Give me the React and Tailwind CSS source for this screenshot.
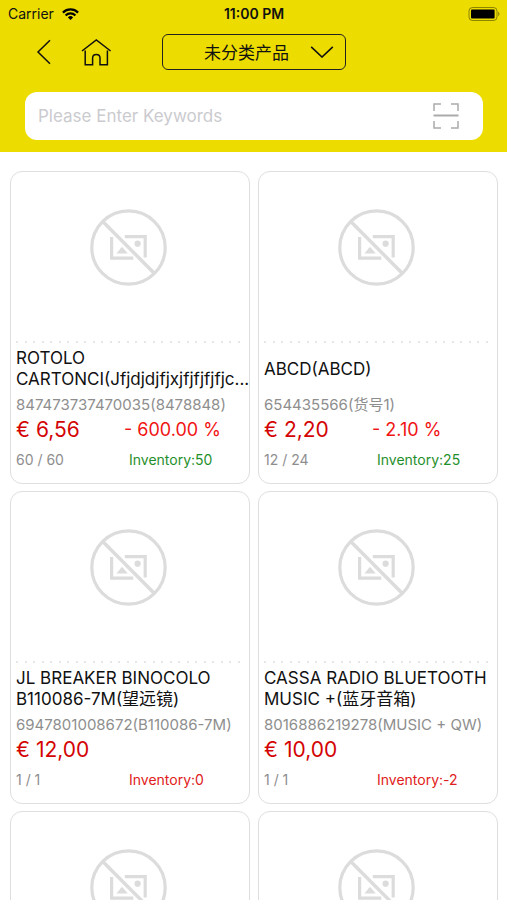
import React, { useState } from 'react';

const products = [
  {
    id: 1,
    name: 'ROTOLO CARTONCI(Jfjdjdjfjxjfjfjfjfjc...',
    code: '847473737470035(8478848)',
    price: '€ 6,56',
    discount: '- 600.00 %',
    pack: '60 / 60',
    inventory: 50
  },
  {
    id: 2,
    name: 'ABCD(ABCD)',
    code: '654435566(货号1)',
    price: '€ 2,20',
    discount: '- 2.10 %',
    pack: '12 / 24',
    inventory: 25
  },
  {
    id: 3,
    name: 'JL BREAKER BINOCOLO B110086-7M(望远镜)',
    code: '6947801008672(B110086-7M)',
    price: '€ 12,00',
    pack: '1 / 1',
    inventory: 0
  },
  {
    id: 4,
    name: 'CASSA RADIO BLUETOOTH MUSIC +(蓝牙音箱)',
    code: '8016886219278(MUSIC + QW)',
    price: '€ 10,00',
    pack: '1 / 1',
    inventory: -2
  },
  { id: 5 },
  { id: 6 }
];

const WifiIcon = () => (
  <svg className="h-3 w-[17px]" viewBox="0 0 17 12" fill="none" stroke="#000" strokeWidth="2.2">
    <path d="M0.9 4.6a10.8 10.8 0 0 1 15.2 0" />
    <path d="M3.6 7.4a6.9 6.9 0 0 1 9.8 0" />
    <path d="M8.5 12L5.9 9.4a3.7 3.7 0 0 1 5.2 0z" fill="#000" stroke="none" />
  </svg>
);

const BatteryIcon = () => (
  <svg className="h-[14px] w-8" viewBox="0 0 32 14" fill="none">
    <rect x="1" y="0.5" width="28" height="13" rx="3.5" stroke="#000" strokeOpacity="0.4" />
    <rect x="3" y="2.4" width="23.6" height="9.2" rx="1" fill="#000" />
    <path d="M30.2 4.8c1.6 0.6 1.6 3.8 0 4.4z" fill="#000" fillOpacity="0.4" />
  </svg>
);

const NoImageIcon = () => (
  <svg className="h-[77px] w-[77px]" viewBox="0 0 77 77" fill="none" stroke="#dcdcdc">
    <circle cx="38.5" cy="38.5" r="36.7" strokeWidth="3.2" />
    <path d="M12.5 12.2L64.2 64.2" strokeWidth="3.4" />
    <path d="M21.6 28v21.2h21.6M34.8 27.6h20.4v21" strokeWidth="3.2" />
    <path d="M26.4 44.6l5.6-6.8 5.8 6.8z" fill="#dcdcdc" stroke="none" />
    <circle cx="47.6" cy="34.7" r="3.1" fill="#dcdcdc" stroke="none" />
  </svg>
);

const DottedLine = () => (
  <div className="flex justify-between pr-px">
    {Array.from({ length: 27 }, (_, i) => (
      <span key={i} className="h-[2px] w-[2px] rounded-full bg-[#dedede]" />
    ))}
  </div>
);

const ProductCard = ({ product }) => (
  <article className="h-[313px] rounded-xl border border-[#dedede] bg-white pl-[5px]">
    <div className="pr-2">
      <div className="flex h-[169px] items-center justify-center pb-[18px]">
        <NoImageIcon />
      </div>
      <DottedLine />
    </div>
    {product.name && (
      <>
        <div className="mt-[5px] flex h-[42px] items-center">
          <h2 className="text-[17px] leading-[21px] text-[#111]">{product.name}</h2>
        </div>
        <p className="mt-[5px] text-[15px] leading-5 whitespace-nowrap text-[#8e8e8e]">{product.code}</p>
        <div className="mt-px flex h-7 items-center whitespace-nowrap">
          <span className="w-[108px] text-[21px] text-[#d40404]">{product.price}</span>
          {product.discount && <span className="text-lg text-[#f01414]">{product.discount}</span>}
        </div>
        <div className="mt-[6px] flex text-sm leading-5 whitespace-nowrap">
          <span className="w-[113px] text-[#8e8e8e]">{product.pack}</span>
          <span className={product.inventory > 0 ? 'text-[#1f8f2b]' : 'text-[#e02020]'}>
            Inventory:{product.inventory}
          </span>
        </div>
      </>
    )}
  </article>
);

const App = () => {
  const [category, setCategory] = useState('none');
  const [keywords, setKeywords] = useState('');

  return (
    <div className="h-screen overflow-hidden bg-white font-['Inter','Noto_Sans_CJK_SC',sans-serif]">
      <header className="bg-[#ecdc00] pb-3">
        <div className="grid h-7 grid-cols-3 items-center pl-2 pr-[7px] text-sm text-[#111]">
          <div className="flex items-center gap-2">
            <span>Carrier</span>
            <WifiIcon />
          </div>
          <span className="text-center font-semibold">11:00 PM</span>
          <div className="flex justify-end">
            <BatteryIcon />
          </div>
        </div>

        <nav className="flex items-center pt-[6px] pl-9">
          <button type="button" aria-label="Back">
            <svg className="h-[26px] w-4" viewBox="0 0 16 26" fill="none" stroke="#111" strokeWidth="1.5">
              <path d="M14 1.2L2 13l12 11.8" />
            </svg>
          </button>
          <button type="button" aria-label="Home" className="ml-7">
            <svg className="h-[30px] w-8" viewBox="0 0 32 30" fill="none" stroke="#111" strokeWidth="1.5">
              <path d="M2 14L16.3 3L30.6 14" />
              <path d="M5.2 13.6V27.8H12.6V21C12.6 16.2 20 16.2 20 21V27.8H27.4V13.6" />
            </svg>
          </button>
          <div className="relative ml-[50px]">
            <select
              aria-label="Category"
              value={category}
              onChange={(e) => setCategory(e.target.value)}
              className="h-9 w-[184px] appearance-none rounded-md border border-[#222] bg-transparent pt-1 pl-[41px] text-[17px] text-[#111]"
            >
              <option value="none">未分类产品</option>
            </select>
            <svg
              className="pointer-events-none absolute top-3 right-3 h-3 w-6"
              viewBox="0 0 24 12"
              fill="none"
              stroke="#111"
              strokeWidth="1.6"
            >
              <path d="M1.2 0.8L12 11L22.8 0.8" />
            </svg>
          </div>
        </nav>

        <div className="mt-[22px] mr-6 ml-[25px] flex h-12 items-center rounded-xl bg-white pr-6 pl-[13px]">
          <input
            type="text"
            aria-label="Keywords"
            placeholder="Please Enter Keywords"
            value={keywords}
            onChange={(e) => setKeywords(e.target.value)}
            className="min-w-0 flex-1 pt-[2px] text-[17px] outline-none placeholder:text-[#cbcbcf]"
          />
          <button type="button" aria-label="Scan">
            <svg className="h-[26px] w-[26px]" viewBox="0 0 26 26" fill="none" stroke="#aaa" strokeWidth="1.5">
              <path d="M1 8V1H8M18 1H25V8M1 18V25H8M18 25H25V18" />
              <path d="M0.5 12.5H25.5" strokeWidth="2" />
            </svg>
          </button>
        </div>
      </header>

      <main className="grid grid-cols-2 gap-x-2 gap-y-[7px] pt-[19px] pr-[9px] pl-[10px]">
        {products.map((product) => (
          <ProductCard key={product.id} product={product} />
        ))}
      </main>
    </div>
  );
};

export default App;
